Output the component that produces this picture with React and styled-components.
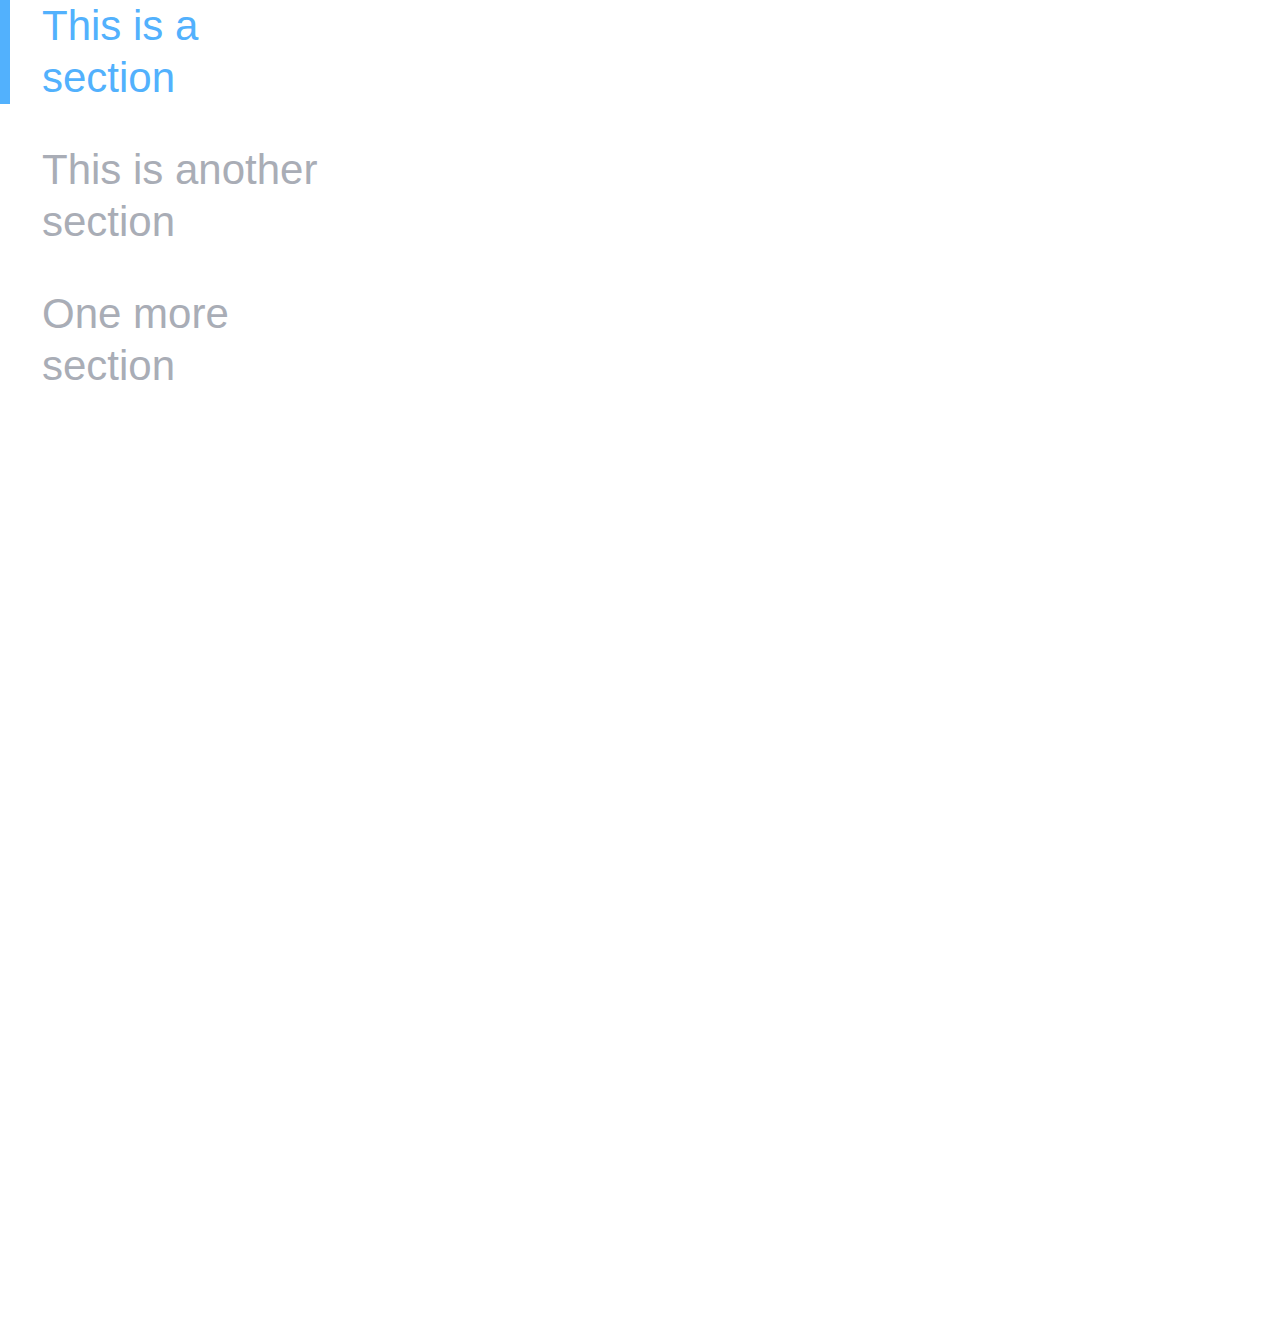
import React, { useState } from "react";
import styled, { createGlobalStyle } from "styled-components";

const GlobalStyle = createGlobalStyle`
  html, body {
    margin: 0;
    padding: 0;
    background: #fff;
  }
  body {
    font-family: "Liberation Sans", Arial, sans-serif;
  }
`;

const Nav = styled.nav`
  width: 332px;
  display: flex;
  flex-direction: column;
  gap: 40px;
`;

const Section = styled.a`
  display: block;
  padding-left: 32px;
  border-left: 10px solid ${ ( { active } ) => ( active ? "#52b1fd" : "transparent" ) };
  font-size: 42px;
  line-height: 52px;
  color: ${ ( { active } ) => ( active ? "#52b1fd" : "#a9adb6" ) };
  text-decoration: none;
  cursor: pointer;
  width: 290px;
`;

const sections = [
    "This is a section",
    "This is another section",
    "One more section"
];

export default function App ()
{
    const [ current, setCurrent ] = useState( 0 );

    return (
        <>
            <GlobalStyle />
            <Nav>
                {
                    sections.map( ( label, i ) => (
                        <Section key={ label } active={ i === current ? 1 : 0 } onClick={ () => setCurrent( i ) }>
                            { label }
                        </Section>
                    ) )
                }
            </Nav>
        </>
    );
}
